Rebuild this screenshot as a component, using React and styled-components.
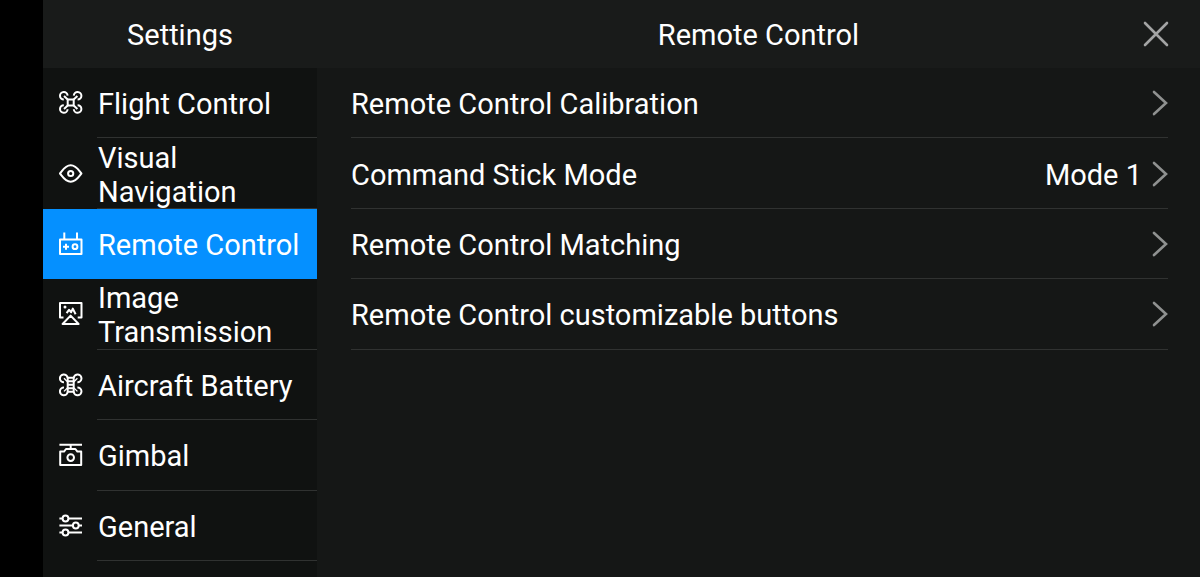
import React, { useState } from "react";
import styled, { createGlobalStyle } from "styled-components";

const menu = [
  { id: "flight", label: "Flight Control" },
  { id: "visual", label: "Visual Navigation" },
  { id: "remote", label: "Remote Control" },
  { id: "image", label: "Image Transmission" },
  { id: "battery", label: "Aircraft Battery" },
  { id: "gimbal", label: "Gimbal" },
  { id: "general", label: "General" },
];

const options = [
  { label: "Remote Control Calibration" },
  { label: "Command Stick Mode", value: "Mode 1" },
  { label: "Remote Control Matching" },
  { label: "Remote Control customizable buttons" },
];

const icons = {
  flight: (
    <>
      <path d="M8.700 8.400h6v6h-6z" />
      <path d="M8.700 8.400 5 4.900M14.700 8.400l3.700-3.500M8.700 14.400 5 17.900M14.700 14.400l3.700 3.500" />
      <path d="M4.800 8.600A3.800 3.800 0 1 1 8.600 4.600M18.600 8.600a3.800 3.800 0 1 0-3.800-4M4.800 14.200a3.800 3.800 0 1 0 3.800 4M18.600 14.200a3.800 3.800 0 1 1-3.800 4" />
    </>
  ),
  visual: (
    <>
      <path d="M1 11.500C3.600 8.400 6.200 3.300 11.700 3.300s8.100 5.100 10.700 8.200c-2.600 3.100-5.200 8.200-10.700 8.200S3.600 14.600 1 11.500z" />
      <circle cx="11.700" cy="11.500" r="2.600" />
    </>
  ),
  remote: (
    <>
      <path d="M1 7.500h21.500v14.500H1zM5.300.5v7M18 .5v7" />
      <path d="M4 14.700h6M7 11.700v6" />
      <circle cx="16" cy="14.700" r="2.400" />
    </>
  ),
  image: (
    <>
      <path d="M4.500 15.500H1V1h21.500v14.500h-3.800" />
      <path d="M11.600 13.600 19.600 22H3.600z" />
      <path d="M7.600 11.200l2.400-3.400 2.200 2.400 1.600-3.600 2.800 5.600" />
      <circle cx="6" cy="5" r="1.500" fill="currentColor" stroke="none" />
    </>
  ),
  battery: (
    <>
      <path d="M8.700 4.800h6v14h-6zM8.700 8.300h6M8.700 11.800h6M8.700 15.300h6" />
      <path d="M8.700 9 5 5.200M14.700 9l3.700-3.800M8.700 14.600 5 18.400M14.700 14.600l3.700 3.800" strokeWidth="1.300" />
      <path d="M5 9.200A3.900 3.900 0 1 1 8.700 4.800M18.400 9.200a3.900 3.900 0 1 0-3.700-4.400M5 14.400a3.900 3.900 0 1 0 3.700 4.400M18.400 14.400a3.900 3.900 0 1 1-3.700 4.400" />
    </>
  ),
  gimbal: (
    <>
      <path d="M.4 1.700H23M11.700 1.700v4.500" />
      <path d="M1.200 8.600h3.800l2-2.600h9.400l2 2.600h3.800v13.400h-21z" />
      <circle cx="11.700" cy="14.600" r="3.300" />
    </>
  ),
  general: (
    <>
      <path d="M.4 4.500h3.300M9.300 4.500H23M.4 11.500H14M19.600 11.500H23M.4 18.500h3.300M9.300 18.500H23" />
      <circle cx="6.500" cy="4.500" r="2.900" />
      <circle cx="16.800" cy="11.500" r="2.900" />
      <circle cx="6.500" cy="18.500" r="2.900" />
    </>
  ),
};

const App = () => {
  const [active, setActive] = useState("remote");

  return (
    <>
      <GlobalStyle />
      <Page>
        <Header>
          <Title $column={1}>Settings</Title>
          <Title $column={2}>Remote Control</Title>
          <CloseButton type="button" aria-label="Close">
            <svg width="26" height="26" viewBox="0 0 26 26" aria-hidden="true">
              <path d="M2 2l22 22M24 2L2 24" />
            </svg>
          </CloseButton>
        </Header>
        <Body>
          <Menu aria-label="Settings">
            {menu.map((item) => (
              <MenuItem
                key={item.id}
                type="button"
                $active={active === item.id}
                onClick={() => setActive(item.id)}
              >
                <MenuIcon viewBox="0 0 24 24" aria-hidden="true">
                  {icons[item.id]}
                </MenuIcon>
                <MenuLabel $active={active === item.id}>{item.label}</MenuLabel>
              </MenuItem>
            ))}
          </Menu>
          <Panel>
            {options.map((option) => (
              <OptionRow key={option.label} type="button">
                <span>{option.label}</span>
                <OptionValue>{option.value}</OptionValue>
                <Chevron viewBox="0 0 16 26" aria-hidden="true">
                  <path d="M2 2l12 11L2 24" />
                </Chevron>
              </OptionRow>
            ))}
          </Panel>
        </Body>
      </Page>
    </>
  );
};

const GlobalStyle = createGlobalStyle`
  * {
    box-sizing: border-box;
  }

  body {
    margin: 0;
    background: #000;
  }

  button {
    margin: 0;
    padding: 0;
    border: 0;
    background: none;
    color: inherit;
    font: inherit;
    text-align: left;
    cursor: pointer;
  }
`;

const Page = styled.div`
  display: flex;
  flex-direction: column;
  min-height: 100vh;
  margin-left: 43px;
  background: #151716;
  color: #fff;
  font-family: Roboto, "Liberation Sans", sans-serif;
  font-size: 29px;
  line-height: 34px;
`;

const Header = styled.header`
  display: grid;
  grid-template-columns: 274px 1fr;
  align-items: center;
  height: 68px;
  background: #191b1a;
`;

const Title = styled.h2`
  grid-row: 1;
  grid-column: ${({ $column }) => $column};
  margin: 0;
  padding-top: 2px;
  font: inherit;
  text-align: center;
`;

const CloseButton = styled.button`
  display: flex;
  grid-row: 1;
  grid-column: 2;
  justify-self: end;
  margin-right: 31px;

  svg {
    fill: none;
    stroke: #a3a4a4;
    stroke-width: 2.6;
    stroke-linecap: round;
  }
`;

const Body = styled.div`
  display: grid;
  grid-template-columns: 274px 1fr;
  flex: 1;
`;

const Menu = styled.nav`
  display: grid;
  grid-template-rows: repeat(7, 1fr);
  padding-bottom: 16px;
  background: #101211;
`;

const MenuItem = styled.button`
  display: flex;
  align-items: center;
  gap: 14px;
  padding-left: 16px;
  background: ${({ $active }) => ($active ? "#0590ff" : "transparent")};
`;

const MenuIcon = styled.svg`
  flex: none;
  width: 24px;
  height: 24px;
  fill: none;
  stroke: currentColor;
  stroke-width: 2;
  stroke-linejoin: round;
`;

const MenuLabel = styled.span`
  display: flex;
  align-items: center;
  flex: 1;
  height: 100%;
  padding: 2px 0 0 1px;
  box-shadow: inset 0 -1px ${({ $active }) => ($active ? "transparent" : "#303231")};
`;

const Panel = styled.main`
  display: grid;
  grid-template-rows: repeat(7, 1fr);
  padding: 0 32px 16px 34px;
`;

const OptionRow = styled.button`
  display: flex;
  align-items: center;
  box-shadow: inset 0 -1px #303231;

  span {
    padding-top: 2px;
  }
`;

const OptionValue = styled.span`
  margin-left: auto;
  padding-right: 10px;
`;

const Chevron = styled.svg`
  flex: none;
  width: 16px;
  height: 26px;
  fill: none;
  stroke: #8f9190;
  stroke-width: 2.6;
  stroke-linecap: round;
`;

export default App;
